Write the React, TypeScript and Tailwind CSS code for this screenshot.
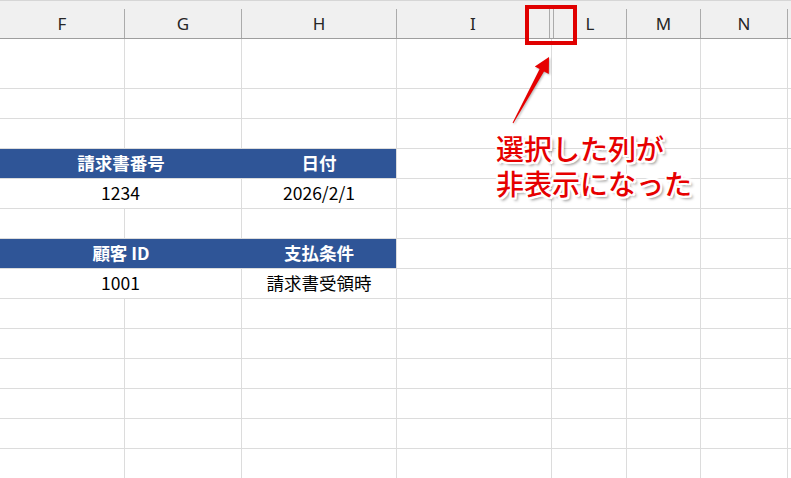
import React from "react";

const font = "font-['Noto_Sans_CJK_JP','Noto_Sans',sans-serif]";

// column header letters, widths in px (hidden J:K shown as a 4px sliver)
const headCols = [
  { label: "F", w: "w-[125px]" },
  { label: "G", w: "w-[117px]" },
  { label: "H", w: "w-[155px]" },
  { label: "I", w: "w-[153px]" },
  { label: "", w: "w-[4px]" },
  { label: "L", w: "w-[73px]" },
  { label: "M", w: "w-[74px]" },
  { label: "N", w: "w-[87px]" },
];

const bodyCols = ["w-[125px]", "w-[117px]", "w-[155px]", "w-[155px]", "w-[75px]", "w-[74px]", "w-[87px]"];

const line = "border-[#dcdcdc]";

const Tail = ({ from }: { from: number }) => (
  <>
    {bodyCols.slice(from).map((w, i) => (
      <div key={i} className={`${w} shrink-0 border-r ${line}`} />
    ))}
    <div className="flex-1" />
  </>
);

const EmptyRow = ({ h = "h-[30px]" }: { h?: string }) => (
  <div className={`flex ${h} border-b ${line}`}>
    <Tail from={0} />
  </div>
);

const BlueRow = ({ a, b }: { a: string; b: string }) => (
  <div className={`flex h-[30px] border-b ${line}`}>
    <div className="w-[242px] shrink-0 bg-[#2f5597] flex items-center justify-center text-white font-bold text-[17.5px]">
      {a}
    </div>
    <div className={`w-[155px] shrink-0 bg-[#2f5597] border-r ${line} flex items-center justify-center text-white font-bold text-[17.5px]`}>
      {b}
    </div>
    <Tail from={3} />
  </div>
);

const DataRow = ({ a, b }: { a: string; b: string }) => (
  <div className={`flex h-[30px] border-b ${line}`}>
    <div className={`w-[242px] shrink-0 border-r ${line} flex items-center justify-center text-[17.5px] text-black`}>
      {a}
    </div>
    <div className={`w-[155px] shrink-0 border-r ${line} flex items-center justify-center text-[17.5px] text-black`}>
      {b}
    </div>
    <Tail from={3} />
  </div>
);

export default function App() {
  return (
    <div className={`relative w-[791px] h-[478px] overflow-hidden bg-white ${font}`}>
      {/* column header */}
      <div className="bg-[#f0f0f0] border-t border-b border-t-[#d6d6d6] border-b-[#9e9e9e]">
        <div className="h-[8px]" />
        <div className="flex h-[29px]">
          {headCols.map((c, i) => (
            <div
              key={i}
              className={`${c.w} shrink-0 border-r border-[#ababab] flex items-center justify-center text-[17px] text-[#262626] font-['Noto_Sans',sans-serif]`}
            >
              {c.label}
            </div>
          ))}
          <div className="flex-1" />
        </div>
      </div>

      {/* sheet body */}
      <EmptyRow h="h-[50px]" />
      <EmptyRow />
      <EmptyRow />
      <BlueRow a="請求書番号" b="日付" />
      <DataRow a="1234" b="2026/2/1" />
      <EmptyRow />
      <BlueRow a="顧客 ID" b="支払条件" />
      <DataRow a="1001" b="請求書受領時" />
      <EmptyRow />
      <EmptyRow />
      <EmptyRow />
      <EmptyRow />
      <EmptyRow />
      <EmptyRow />

      {/* annotation: highlight on hidden columns */}
      <div className="absolute left-[525px] top-[5px] w-[52px] h-[40px] border-4 border-[#e00000]" />

      <svg className="absolute left-0 top-0 drop-shadow-[1px_1px_1px_rgba(0,0,0,0.3)]" width="791" height="478">
        <polygon
          points="549,57 548.8,74 544,71.4 513.4,123.2 512.6,122.8 539.6,69 534.8,66.4"
          fill="#e60000"
        />
      </svg>

      <p className="absolute left-[496px] top-[131px] text-[28px] leading-[35px] font-medium text-[#e60000] [text-shadow:-2px_-2px_0_#fff,2px_-2px_0_#fff,-2px_2px_0_#fff,2px_2px_0_#fff,0_2px_0_#fff,0_-2px_0_#fff,2px_0_0_#fff,-2px_0_0_#fff,3px_3px_3px_rgba(0,0,0,0.45)]">
        選択した列が
        <br />
        非表示になった
      </p>
    </div>
  );
}
